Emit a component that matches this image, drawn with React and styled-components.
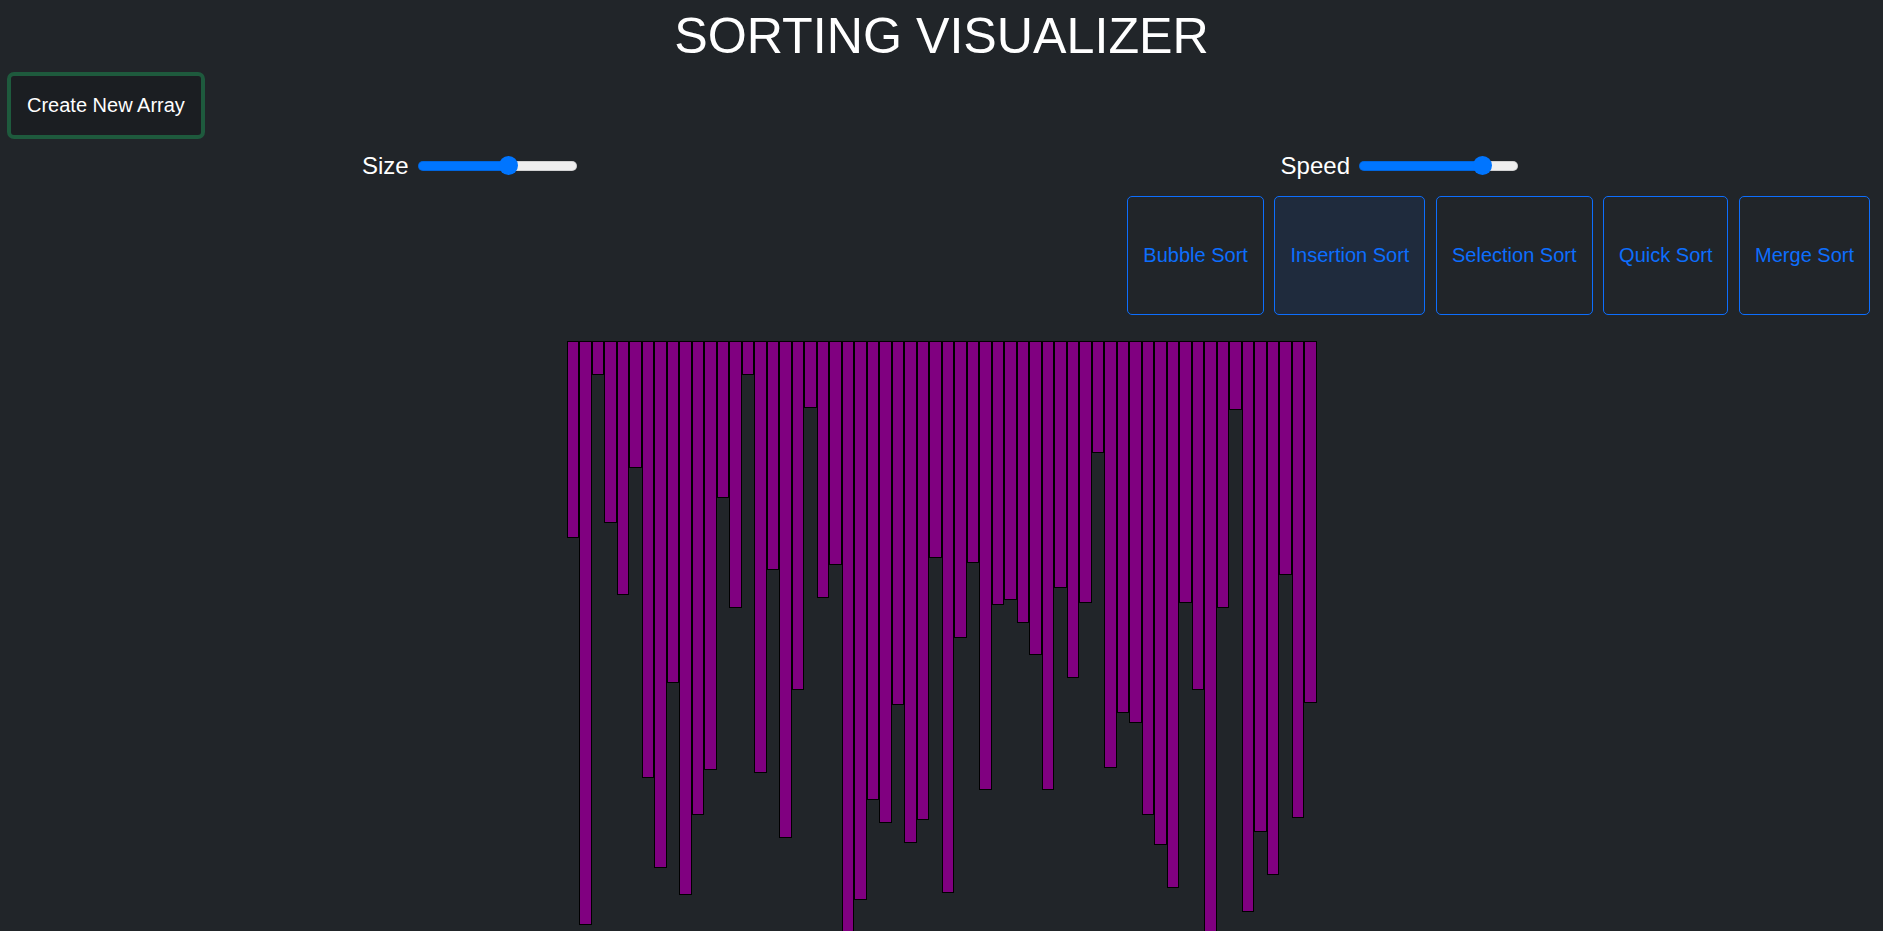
import React, { useState } from 'react'
import styled, { createGlobalStyle } from 'styled-components'

const BARS = [
  197, 584, 34, 182, 254, 127, 437, 527, 342, 554,
  474, 429, 157, 267, 34, 432, 229, 497, 349, 67,
  257, 224, 600, 559, 459, 482, 364, 502, 479, 217,
  552, 297, 222, 449, 264, 259, 282, 314, 449, 247,
  337, 262, 112, 427, 372, 382, 474, 504, 547, 262,
  349, 600, 267, 69, 571, 491, 534, 234, 477, 362,
]

const SORTS = ['Bubble Sort', 'Insertion Sort', 'Selection Sort', 'Quick Sort', 'Merge Sort']

const TRACK_W = 159
const THUMB = 19

const GlobalStyle = createGlobalStyle`
  html, body {
    margin: 0;
    padding: 0;
    overflow: hidden;
    background: #212529;
  }
  body {
    font-family: "Liberation Sans", Arial, sans-serif;
    color: #fff;
  }
`

const App = () => {
  const [size, setSize] = useState(58)
  const [speed, setSpeed] = useState(81.4)

  return (
    <Page>
      <GlobalStyle />
      <Title>SORTING VISUALIZER</Title>
      <NewArrayButton>Create New Array</NewArrayButton>
      <SliderRow>
        <SliderGroup>
          <Label>Size</Label>
          <Range value={size} $pct={size} onChange={(e) => setSize(+e.target.value)} />
        </SliderGroup>
        <SliderGroup>
          <Label>Speed</Label>
          <Range value={speed} $pct={speed} onChange={(e) => setSpeed(+e.target.value)} />
        </SliderGroup>
      </SliderRow>
      <SortRow>
        {SORTS.map((name) => (
          <SortButton key={name} $active={name === 'Insertion Sort'}>
            {name}
          </SortButton>
        ))}
      </SortRow>
      <Bars>
        {BARS.map((h, i) => (
          <Bar key={i} style={{ height: `${h}px` }} />
        ))}
      </Bars>
    </Page>
  )
}

export default App

const Page = styled.div`
  display: flex;
  flex-direction: column;
  padding: 8px 8px 0;
  min-height: 931px;
  box-sizing: border-box;
`
const Title = styled.h1`
  margin: 0;
  text-align: center;
  font-size: 50.2px;
  font-weight: 400;
  line-height: 56px;
  color: #fff;
`
const NewArrayButton = styled.button`
  align-self: flex-start;
  margin: 8px 0 0 -1px;
  height: 67px;
  padding: 0 16px;
  font-family: inherit;
  font-size: 20px;
  color: #fff;
  background: #1b1e22;
  border: 4px solid #1e5a3d;
  border-radius: 7px;
  cursor: pointer;
`
const SliderRow = styled.div`
  display: flex;
  justify-content: space-around;
  align-items: center;
  margin-top: 13px;
  padding: 0 5px 0 2px;
`
const SliderGroup = styled.div`
  display: flex;
  align-items: center;
  gap: 9px;
`
const Label = styled.span`
  font-size: 24px;
  line-height: 27.6px;
  color: #fff;
`
const Range = styled.input.attrs({ type: 'range', min: 0, max: 100, step: 0.1 })`
  -webkit-appearance: none;
  appearance: none;
  margin: 0;
  width: ${TRACK_W}px;
  height: 10px;
  border-radius: 5px;
  box-shadow: inset 0 0 0 1px rgba(0, 0, 0, 0.12);
  background: ${(p) => {
    const px = THUMB / 2 + (p.$pct / 100) * (TRACK_W - THUMB)
    return `linear-gradient(to right, #0075ff 0, #0075ff ${px}px, #efefef ${px}px, #efefef 100%)`
  }};
  outline: none;
  cursor: pointer;

  &::-webkit-slider-thumb {
    -webkit-appearance: none;
    appearance: none;
    width: ${THUMB}px;
    height: ${THUMB}px;
    border-radius: 50%;
    background: #0075ff;
    border: none;
  }
`
const SortRow = styled.div`
  display: flex;
  justify-content: flex-end;
  gap: 10.6px;
  margin-top: 16.4px;
  padding-right: 5px;
`
const SortButton = styled.button`
  height: 119px;
  padding: 0 15px;
  font-family: inherit;
  font-size: 20px;
  color: #0d6efd;
  background: ${(p) => (p.$active ? '#1f2b3d' : 'transparent')};
  border: 1px solid #0d6efd;
  border-radius: 5px;
  cursor: pointer;
`
const Bars = styled.div`
  display: flex;
  justify-content: center;
  align-items: flex-start;
  margin-top: 26px;
`
const Bar = styled.div`
  box-sizing: border-box;
  width: 12.5px;
  flex-shrink: 0;
  background: #800080;
  border: 1px solid #000;
`
